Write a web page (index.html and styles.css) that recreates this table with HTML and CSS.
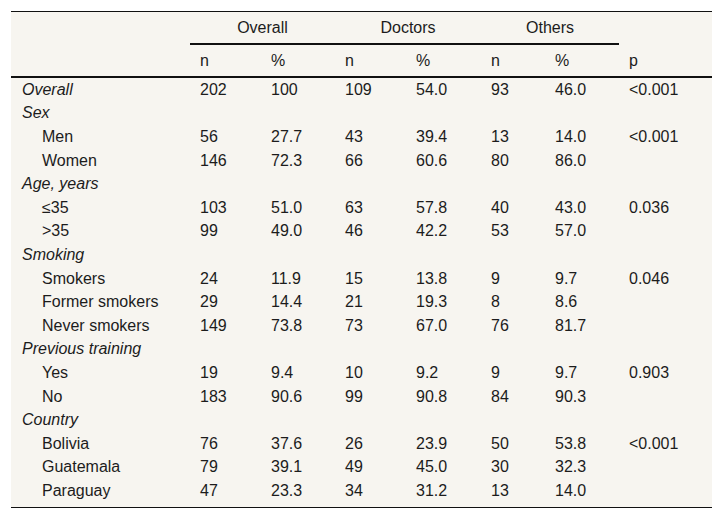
FILE: index.html
```html
<!DOCTYPE html>
<html lang="en">
<head>
<meta charset="utf-8">
<title>Table</title>
<link rel="stylesheet" href="styles.css">
</head>
<body>
<table class="data">
  <colgroup>
    <col class="c-label"><col class="c1"><col class="c2"><col class="c3"><col class="c4"><col class="c5"><col class="c6"><col class="c7">
  </colgroup>
  <thead>
    <tr class="group">
      <th></th>
      <th colspan="2" class="grp">Overall</th>
      <th colspan="2" class="grp">Doctors</th>
      <th colspan="2" class="grp">Others</th>
      <th></th>
    </tr>
    <tr class="sub">
      <th></th>
      <th>n</th><th>%</th><th>n</th><th>%</th><th>n</th><th>%</th><th>p</th>
    </tr>
  </thead>
  <tbody>
    <tr><td class="cat">Overall</td><td>202</td><td>100</td><td>109</td><td>54.0</td><td>93</td><td>46.0</td><td>&lt;0.001</td></tr>
    <tr><td class="cat">Sex</td><td></td><td></td><td></td><td></td><td></td><td></td><td></td></tr>
    <tr><td class="item">Men</td><td>56</td><td>27.7</td><td>43</td><td>39.4</td><td>13</td><td>14.0</td><td>&lt;0.001</td></tr>
    <tr><td class="item">Women</td><td>146</td><td>72.3</td><td>66</td><td>60.6</td><td>80</td><td>86.0</td><td></td></tr>
    <tr><td class="cat">Age, years</td><td></td><td></td><td></td><td></td><td></td><td></td><td></td></tr>
    <tr><td class="item">≤35</td><td>103</td><td>51.0</td><td>63</td><td>57.8</td><td>40</td><td>43.0</td><td>0.036</td></tr>
    <tr><td class="item">&gt;35</td><td>99</td><td>49.0</td><td>46</td><td>42.2</td><td>53</td><td>57.0</td><td></td></tr>
    <tr><td class="cat">Smoking</td><td></td><td></td><td></td><td></td><td></td><td></td><td></td></tr>
    <tr><td class="item">Smokers</td><td>24</td><td>11.9</td><td>15</td><td>13.8</td><td>9</td><td>9.7</td><td>0.046</td></tr>
    <tr><td class="item">Former smokers</td><td>29</td><td>14.4</td><td>21</td><td>19.3</td><td>8</td><td>8.6</td><td></td></tr>
    <tr><td class="item">Never smokers</td><td>149</td><td>73.8</td><td>73</td><td>67.0</td><td>76</td><td>81.7</td><td></td></tr>
    <tr><td class="cat">Previous training</td><td></td><td></td><td></td><td></td><td></td><td></td><td></td></tr>
    <tr><td class="item">Yes</td><td>19</td><td>9.4</td><td>10</td><td>9.2</td><td>9</td><td>9.7</td><td>0.903</td></tr>
    <tr><td class="item">No</td><td>183</td><td>90.6</td><td>99</td><td>90.8</td><td>84</td><td>90.3</td><td></td></tr>
    <tr><td class="cat">Country</td><td></td><td></td><td></td><td></td><td></td><td></td><td></td></tr>
    <tr><td class="item">Bolivia</td><td>76</td><td>37.6</td><td>26</td><td>23.9</td><td>50</td><td>53.8</td><td>&lt;0.001</td></tr>
    <tr><td class="item">Guatemala</td><td>79</td><td>39.1</td><td>49</td><td>45.0</td><td>30</td><td>32.3</td><td></td></tr>
    <tr><td class="item">Paraguay</td><td>47</td><td>23.3</td><td>34</td><td>31.2</td><td>13</td><td>14.0</td><td></td></tr>
  </tbody>
</table>
</body>
</html>
```

FILE: styles.css
```css
html, body {
  margin: 0;
  padding: 0;
  background: #ffffff;
}
body {
  padding: 11px;
  font-family: "Liberation Sans", Arial, sans-serif;
  font-size: 16px;
  color: #1c1c1c;
}
.data {
  width: 701px;
  table-layout: fixed;
  border-collapse: separate;
  border-spacing: 0;
  background: #f7f5f0;
  border-top: 1px solid #111;
  border-bottom: 1px solid #111;
}
.c-label { width: 179px; }
.c1 { width: 71px; }
.c2 { width: 74px; }
.c3 { width: 71px; }
.c4 { width: 75px; }
.c5 { width: 64px; }
.c6 { width: 74px; }
.c7 { width: 93px; }

.data th {
  font-weight: normal;
  height: 31px;
  padding: 0 0 0 10px;
  text-align: left;
  vertical-align: middle;
  line-height: 18px;
}
.data .group .grp {
  text-align: center;
  padding: 0;
  border-bottom: 2px solid #111;
}
.data .sub th {
  border-bottom: 2px solid #111;
}
.data td {
  height: 23.6px;
  padding: 0 0 0 10px;
  line-height: 18px;
  vertical-align: middle;
  white-space: nowrap;
}
.data tbody tr:last-child td {
  padding-bottom: 4px;
}
.data td.cat {
  font-style: italic;
  padding-left: 11px;
}
.data td.item {
  padding-left: 31px;
}
```
